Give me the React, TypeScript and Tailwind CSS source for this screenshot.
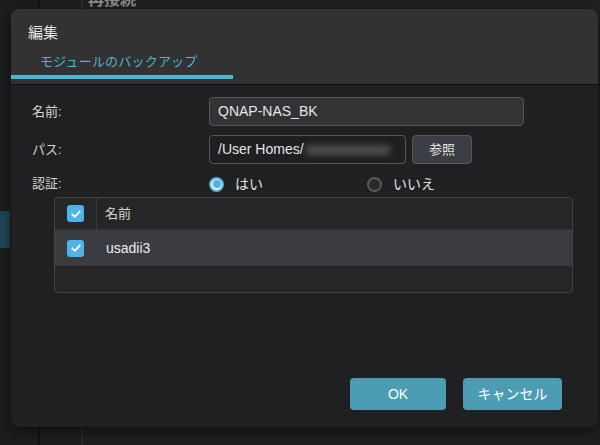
import React, { useState } from 'react';

const font = { fontFamily: '"Liberation Sans", "Noto Sans CJK JP", sans-serif' };

function Check() {
  return (
    <span className="w-[17px] h-[17px] rounded-[3px] bg-[#4fb3e8] flex items-center justify-center">
      <svg width="12" height="12" viewBox="0 0 12 12" fill="none">
        <path d="M2.2 6.3 L4.8 8.8 L9.8 3.3" stroke="white" strokeWidth="1.8" strokeLinecap="round" strokeLinejoin="round" />
      </svg>
    </span>
  );
}

function Radio({ on }: { on: boolean }) {
  return on ? (
    <span className="w-[15px] h-[15px] rounded-full bg-[#4fb3e8] flex items-center justify-center">
      <span className="w-[11px] h-[11px] rounded-full bg-[#e8f4fb] flex items-center justify-center">
        <span className="w-[8px] h-[8px] rounded-full bg-[#4fb3e8]" />
      </span>
    </span>
  ) : (
    <span className="w-[15px] h-[15px] rounded-full bg-[#5a5a5c] flex items-center justify-center">
      <span className="w-[11px] h-[11px] rounded-full bg-[#2a2a2c]" />
    </span>
  );
}

export default function App() {
  const [auth, setAuth] = useState(true);
  return (
    <div className="relative w-[600px] h-[445px] overflow-hidden bg-[#1d1d1f]" style={font}>
      {/* background page */}
      <div className="flex h-full">
        <div className="w-[38px] flex flex-col">
          <div className="h-[211px]" />
          <div className="w-[10px] h-[37px] bg-[#1f4658]" />
        </div>
        <div className="w-[2px] bg-[#121213]" />
        <div className="w-[41px] bg-[#1e1e20]" />
        <div className="w-[2px] bg-[#2a2a2c]" />
        <div className="flex-1 bg-[#202022] pl-[5px]">
          <div className="-mt-[9px] text-[16px] font-bold text-[#8a8a8a] leading-[18px]">再接続</div>
        </div>
      </div>

      {/* dialog */}
      <div className="absolute left-[11px] top-[9px] w-[587px] h-[418px] rounded-[8px] bg-[#202022] shadow-[0_4px_14px_rgba(0,0,0,0.55)] overflow-hidden flex flex-col">
        <div className="h-[75px] bg-[#323232] flex flex-col">
          <div className="pl-[17px] pt-[14px] text-[15px] leading-[20px] text-[#e2e2e2]">編集</div>
          <div className="mt-[10px] w-[222px] flex flex-col">
            <div className="pl-[29px] text-[13px] leading-[18px] text-[#52b2cf] tracking-[0.2px]">モジュールのバックアップ</div>
            <div className="mt-[4px] h-[4px] bg-[#4cb6d4]" />
          </div>
        </div>
        <div className="h-[1px] bg-[#0e0e0f]" />

        <div className="flex flex-col pt-[12px] text-[13px] text-[#d6d6d6]">
          <div className="flex items-center h-[29px]">
            <div className="w-[198px] pl-[21px]">名前:</div>
            <div className="w-[315px] h-[29px] rounded-[4px] border border-[#56565a] bg-[#333336] flex items-center pl-[8px] text-[14px] text-[#e6e6e6]">
              QNAP-NAS_BK
            </div>
          </div>
          <div className="flex items-center h-[29px] mt-[9px]">
            <div className="w-[198px] pl-[21px]">パス:</div>
            <div className="w-[197px] h-[29px] rounded-[4px] border border-[#56565a] bg-[#1f1f21] flex items-center pl-[8px] text-[14px] text-[#e6e6e6] overflow-hidden">
              <span>/User Homes/</span>
              <span className="ml-[1px] w-[86px] h-[10px] rounded-full bg-[#5a5a5e] blur-[3px] opacity-80" />
            </div>
            <button className="ml-[6px] w-[60px] h-[29px] rounded-[4px] border border-[#58585c] bg-[#3b3e44] text-[13px] text-[#e6e6e6]">
              参照
            </button>
          </div>
          <div className="flex items-center h-[20px] mt-[10px]">
            <div className="w-[198px] pl-[21px]">認証:</div>
            <button className="w-[158px] flex items-center gap-[11px]" onClick={() => setAuth(true)}>
              <Radio on={auth} />
              <span className="text-[14px] text-[#e0e0e0]">はい</span>
            </button>
            <button className="flex items-center gap-[11px]" onClick={() => setAuth(false)}>
              <Radio on={!auth} />
              <span className="text-[14px] text-[#e0e0e0]">いいえ</span>
            </button>
          </div>

          <div className="ml-[43px] mt-[3px] w-[519px] h-[96px] rounded-[4px] border border-[#444447] bg-[#262627] overflow-hidden flex flex-col">
            <div className="h-[31px] flex items-center">
              <div className="w-[42px] h-full flex items-center pl-[12px] border-r border-[#38383a]">
                <Check />
              </div>
              <div className="pl-[8px] text-[13px] text-[#d6d6d6]">名前</div>
            </div>
            <div className="h-[37px] bg-[#3b3c40] flex items-center border-t border-[#303032]">
              <div className="w-[42px] pl-[12px] flex items-center">
                <Check />
              </div>
              <div className="pl-[9px] text-[14px] text-[#ececec]">usadii3</div>
            </div>
          </div>
        </div>

        <div className="flex-1" />
        <div className="flex justify-end gap-[17px] pr-[36px] pb-[17px]">
          <button className="w-[96px] h-[32px] rounded-[4px] bg-[#4c9cb3] text-[14px] text-white">OK</button>
          <button className="w-[99px] h-[32px] rounded-[4px] bg-[#4c9cb3] text-[14px] text-white">キャンセル</button>
        </div>
      </div>
    </div>
  );
}
